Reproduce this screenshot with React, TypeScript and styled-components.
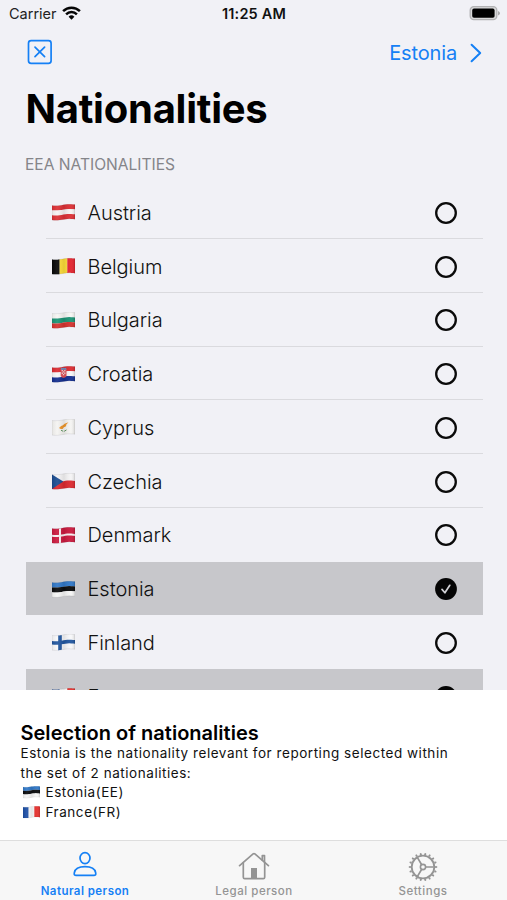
import { useId } from 'react';
import type { ReactNode } from 'react';
import styled, { createGlobalStyle } from 'styled-components';

const BLUE = '#1580f5';
const GREY = '#949494';

const GlobalStyle = createGlobalStyle`
  * { box-sizing: border-box; }
  body { margin: 0; background: #f1f1f6; }
`;

const Screen = styled.div`
  width: 507px;
  height: 900px;
  overflow: hidden;
  display: flex;
  flex-direction: column;
  background: #f1f1f6;
  color: #000;
  font-family: Inter, "Liberation Sans", sans-serif;
`;

const StatusBar = styled.header`
  height: 27px;
  padding: 0 7px 0 9px;
  display: grid;
  grid-template-columns: 1fr auto 1fr;
  align-items: center;
  font-size: 14.5px;
`;

const Carrier = styled.div`
  display: flex;
  align-items: center;
  gap: 5px;
  color: #222;
`;

const Clock = styled.div`
  font-weight: 600;
  letter-spacing: 0.2px;
  margin-right: 1px;
  color: #111;
`;

const BatterySlot = styled.div`
  display: flex;
  justify-content: flex-end;
`;

const NavBar = styled.nav`
  height: 51px;
  padding: 0 25px 0 27px;
  display: flex;
  align-items: center;
  justify-content: space-between;
`;

const NavButton = styled.button`
  display: flex;
  align-items: center;
  gap: 13px;
  padding: 0;
  border: 0;
  background: none;
  color: ${BLUE};
  font: 400 20px Inter, sans-serif;
  letter-spacing: -0.15px;
`;

const CloseButton = styled(NavButton)`
  padding-bottom: 2px;
`;

const Title = styled.h1`
  margin: 0;
  padding-left: 25.5px;
  height: 61px;
  line-height: 61px;
  font-size: 40px;
  font-weight: 700;
  letter-spacing: -0.25px;
`;

const SectionLabel = styled.h2`
  margin: 0;
  padding: 0 0 0 25px;
  height: 46px;
  line-height: 51px;
  font-size: 15.6px;
  font-weight: 400;
  letter-spacing: -0.02px;
  color: #85858a;
`;

const List = styled.ul`
  flex: none;
  height: 505px;
  margin: 0;
  padding: 0.4px 24.5px 0 25.5px;
  list-style: none;
  overflow: hidden;
`;

const Row = styled.li<{ $selected?: boolean }>`
  height: 53.75px;
  display: flex;
  padding-left: 20px;
  background: ${(p) => (p.$selected ? '#c7c7cb' : 'transparent')};
`;

const RowBody = styled.div<{ $divider: boolean }>`
  flex: 1;
  display: flex;
  align-items: center;
  padding: 2px 24.5px 0 6px;
  border-bottom: 1px solid ${(p) => (p.$divider ? '#dadade' : 'transparent')};
`;

const Country = styled.span`
  flex: 1;
  margin-left: 13px;
  font-size: 20px;
  font-weight: 300;
  letter-spacing: -0.05px;
  color: #111;
`;

const Summary = styled.section`
  height: 150px;
  padding: 30px 21px 0 20.5px;
  background: #fff;
  color: #111;
  font-size: 13.5px;
  line-height: 19.5px;
  letter-spacing: 0.54px;
`;

const SummaryTitle = styled.h3`
  margin: 0;
  line-height: 26px;
  margin-bottom: -2px;
  font-size: 20px;
  font-weight: 600;
  letter-spacing: 0.02px;
  color: #000;
`;

const SummaryText = styled.p`
  margin: 0;
  width: 450px;
`;

const SummaryItem = styled.div`
  display: flex;
  align-items: center;
  gap: 6px;
  padding-left: 2px;
  height: 19.5px;
`;

const TabBar = styled.footer`
  height: 60px;
  display: grid;
  grid-template-columns: repeat(3, 1fr);
  background: #f7f7f7;
  border-top: 1px solid #dedede;
`;

const Tab = styled.div<{ $active?: boolean }>`
  display: flex;
  flex-direction: column;
  align-items: center;
  padding: 9px 0 0 1px;
  color: ${(p) => (p.$active ? BLUE : GREY)};
  font-size: 11.5px;
  line-height: 16px;
  font-weight: ${(p) => (p.$active ? 600 : 500)};
  letter-spacing: ${(p) => (p.$active ? 0.46 : 0.52)}px;
`;

const TabIcon = styled.span`
  height: 33px;
  display: flex;
  margin-right: 1px;
`;

/** A band of cloth whose edges follow the wave of the flag. */
const band = (y0: number, y1: number, x0 = 0, x1 = 23) => {
  const wave = (x: number) => 1.4 - 0.9 * (x / 23) + 0.5 * Math.sin((x / 23) * Math.PI * 2 + 0.25);
  const steps = Array.from({ length: 13 }, (_, i) => x0 + ((x1 - x0) * i) / 12);
  const top = steps.map((x) => `${x.toFixed(2)} ${(y0 + wave(x)).toFixed(2)}`);
  const bottom = [...steps].reverse().map((x) => `${x.toFixed(2)} ${(y1 + wave(x)).toFixed(2)}`);
  return `M${top.join('L')}L${bottom.join('L')}Z`;
};

const H = 14.6;

const horizontal = (colors: string[]) =>
  colors.map((c, i) => (
    <path key={i} d={band((H * i) / colors.length, (H * (i + 1)) / colors.length)} fill={c} />
  ));

const vertical = (colors: string[]) =>
  colors.map((c, i) => (
    <path key={i} d={band(0, H, (23 * i) / colors.length, (23 * (i + 1)) / colors.length)} fill={c} />
  ));

const nordic = (field: string, cross: string, w: number) => (
  <>
    <path d={band(0, H)} fill={field} />
    <path d={band(H / 2 - w / 2, H / 2 + w / 2)} fill={cross} />
    <path d={band(0, H, 8 - w / 2, 8 + w / 2)} fill={cross} />
  </>
);

const flags: Record<string, ReactNode> = {
  Austria: horizontal(['#dc3035', '#f7f3f3', '#dc3035']),
  Belgium: vertical(['#080808', '#fddc38', '#e3242f']),
  Bulgaria: horizontal(['#f6f6f4', '#1c9474', '#d5332f']),
  Croatia: (
    <>
      {horizontal(['#dc2c33', '#f7f6f7', '#142f90'])}
      <path d="M8.7 3.2h5.8v6.2q-.5 2.3-2.9 2.7q-2.5-.5-2.9-2.7z" fill="#df5058" />
      <path d="M9.7 4h1.2v1.3H9.7zm2.5 0h1.2v1.3h-1.2zm-1.3 1.3h1.3v1.3h-1.3zM9.7 6.6h1.2v1.3H9.7zm2.5 0h1.2v1.3h-1.2zM10.9 8h1.3v1.3h-1.3z" fill="#f7dadd" />
      <path d="M8.8 2.8l1-1 1 .5 1-.8 1 .7 1-.5.6 1.1v1H8.8z" fill="#6b94c8" />
    </>
  ),
  Cyprus: (
    <>
      <path d={band(0, H)} fill="#f5f4f2" />
      <path d="M7 9l2.1-2.1 1.8-.6 1.7-1.6 3.8-1.5-2.2 2.5-.1 1.5-2.2 1.1-1.3 1.6-1.9.2z" fill="#ee962a" />
      <path d="M9 11.2l2.2 1.1M14.5 10.9l-2.3 1.4" stroke="#5f9560" strokeWidth="1" />
    </>
  ),
  Czechia: (
    <>
      {horizontal(['#f5f4f5', '#dc2a30'])}
      <path d="M0 1.5L11.3 8.5 0 16.1z" fill="#1c4d92" />
    </>
  ),
  Denmark: nordic('#cb1a3f', '#f9f1f3', 2),
  Estonia: horizontal(['#3178c8', '#0a0b0d', '#f6f6f6']),
  Finland: nordic('#f8f8fa', '#2257a0', 3.6),
  France: vertical(['#1d4fa5', '#fafafa', '#e5322f']),
};

function Flag({ country, width = 23 }: { country: string; width?: number }) {
  const id = useId();
  return (
    <svg width={width} height={(width * 17) / 23} viewBox="0 0 23 17">
      <defs>
        <linearGradient id={id}>
          <stop offset="0" stopColor="#000" stopOpacity=".06" />
          <stop offset=".22" stopColor="#fff" stopOpacity=".07" />
          <stop offset=".52" stopColor="#000" stopOpacity=".09" />
          <stop offset=".82" stopColor="#fff" stopOpacity=".04" />
          <stop offset="1" stopColor="#000" stopOpacity=".14" />
        </linearGradient>
      </defs>
      {flags[country]}
      <path d={band(0, H)} fill={`url(#${id})`} stroke="#000" strokeOpacity=".14" strokeWidth=".5" />
    </svg>
  );
}

function Radio({ checked }: { checked?: boolean }) {
  return (
    <svg width="24" height="24" viewBox="0 0 24 24" fill="none">
      {checked ? (
        <>
          <circle cx="12" cy="12" r="10.9" fill="#050505" />
          <path d="M8 12.4l2.9 3.4 4.9-7.5" stroke="#d2d2d6" strokeWidth="1.7" strokeLinecap="round" strokeLinejoin="round" />
        </>
      ) : (
        <circle cx="12" cy="12" r="9.8" stroke="#0a0a0a" strokeWidth="2.3" />
      )}
    </svg>
  );
}

function Wifi() {
  return (
    <svg width="19" height="15" viewBox="0 0 19 15" fill="none" stroke="#050505" strokeWidth="2.5">
      <path d="M1.1 5.1a12 12 0 0 1 16.8 0" />
      <path d="M4.1 8.3a7.7 7.7 0 0 1 10.8 0" />
      <path d="M9.5 13.8L6.6 10.8a4.1 4.1 0 0 1 5.8 0z" fill="#050505" stroke="none" />
    </svg>
  );
}

function Battery() {
  return (
    <svg width="31" height="15" viewBox="0 0 31 15">
      <rect x="1.2" y=".7" width="26.6" height="13" rx="3.6" fill="#d9d9da" stroke="#b2b2b4" strokeWidth="1.3" />
      <rect x="3.2" y="2.6" width="22.4" height="9.2" rx="1.8" fill="#000" />
      <path d="M29 4.9q2 .8 2 2.3t-2 2.3z" fill="#aaaaac" />
    </svg>
  );
}

function CloseIcon() {
  return (
    <svg width="26" height="26" viewBox="0 0 26 26" fill="none" stroke={BLUE} strokeLinecap="round">
      <rect x="1.5" y="1.7" width="22.6" height="22.6" rx="2.6" strokeWidth="1.7" />
      <path d="M8 8.1l9.6 9.6M17.6 8.1L8 17.7" strokeWidth="1.7" />
    </svg>
  );
}

function PersonIcon() {
  return (
    <svg width="26" height="28" viewBox="0 0 26 28" fill="none" stroke={BLUE} strokeWidth="1.7">
      <ellipse cx="13" cy="8.1" rx="5" ry="5.5" />
      <path d="M4.2 25.4c-1.8 0-2.2-1-1.9-2.6C3 19.1 7.1 16.7 13 16.7s10 2.4 10.7 6.1c.3 1.6-.1 2.6-1.9 2.6z" />
    </svg>
  );
}

function HouseIcon() {
  return (
    <svg width="32" height="30" viewBox="0 0 32 30" fill="none" stroke={GREY} strokeWidth="1.7" strokeLinecap="round" strokeLinejoin="round">
      <path d="M1.6 15.7L15.1 3.9Q16 3.2 16.9 3.9L30.4 15.7" />
      <path d="M5.3 12.7v14.6q0 1.4 1.4 1.4h18.6q1.4 0 1.4-1.4V12.7M26.5 12V5.6h-2.2V10" />
      <path d="M13 28.5V18h6v10.5z" fill={GREY} stroke="none" />
    </svg>
  );
}

function GearIcon() {
  const teeth = Array.from({ length: 18 }, (_, i) => i * 20);
  return (
    <svg width="30" height="32" viewBox="0 0 30 32" fill="none" stroke={GREY}>
      <circle cx="15" cy="17" r="11.3" strokeWidth="1.8" />
      {teeth.map((a) => (
        <path key={a} d="M13.9 4.9l.4-2.1h1.4l.4 2.1z" fill={GREY} stroke="none" transform={`rotate(${a + 10} 15 17)`} />
      ))}
      <circle cx="15" cy="17" r="2.6" strokeWidth="1.6" />
      <path d="M17.6 17h8.2M13.7 14.7L9.3 7.4M13.7 19.3l-4.4 7.3" strokeWidth="1.7" />
    </svg>
  );
}

const countries = ['Austria', 'Belgium', 'Bulgaria', 'Croatia', 'Cyprus', 'Czechia', 'Denmark', 'Estonia', 'Finland', 'France'];
const selected = ['Estonia', 'France'];

export default function App() {
  return (
    <Screen>
      <GlobalStyle />
      <StatusBar>
        <Carrier>
          Carrier
          <Wifi />
        </Carrier>
        <Clock>11:25 AM</Clock>
        <BatterySlot>
          <Battery />
        </BatterySlot>
      </StatusBar>
      <NavBar>
        <CloseButton aria-label="Close">
          <CloseIcon />
        </CloseButton>
        <NavButton>
          Estonia
          <svg width="12" height="20" viewBox="0 0 12 20" fill="none" stroke={BLUE} strokeWidth="2" strokeLinecap="round" strokeLinejoin="round">
            <path d="M1.6 1.8l8.6 8.2-8.6 8.2" />
          </svg>
        </NavButton>
      </NavBar>
      <Title>Nationalities</Title>
      <SectionLabel>EEA NATIONALITIES</SectionLabel>
      <List>
        {countries.map((name, i) => {
          const checked = selected.includes(name);
          const touchesSelected = checked || selected.includes(countries[i + 1]);
          return (
            <Row key={name} $selected={checked}>
              <RowBody $divider={!touchesSelected}>
                <Flag country={name} />
                <Country>{name}</Country>
                <Radio checked={checked} />
              </RowBody>
            </Row>
          );
        })}
      </List>
      <Summary>
        <SummaryTitle>Selection of nationalities</SummaryTitle>
        <SummaryText>Estonia is the nationality relevant for reporting selected within the set of 2 nationalities:</SummaryText>
        <SummaryItem>
          <Flag country="Estonia" width={17} />
          Estonia(EE)
        </SummaryItem>
        <SummaryItem>
          <Flag country="France" width={17} />
          France(FR)
        </SummaryItem>
      </Summary>
      <TabBar>
        <Tab $active>
          <TabIcon><PersonIcon /></TabIcon>
          Natural person
        </Tab>
        <Tab>
          <TabIcon><HouseIcon /></TabIcon>
          Legal person
        </Tab>
        <Tab>
          <TabIcon><GearIcon /></TabIcon>
          Settings
        </Tab>
      </TabBar>
    </Screen>
  );
}
